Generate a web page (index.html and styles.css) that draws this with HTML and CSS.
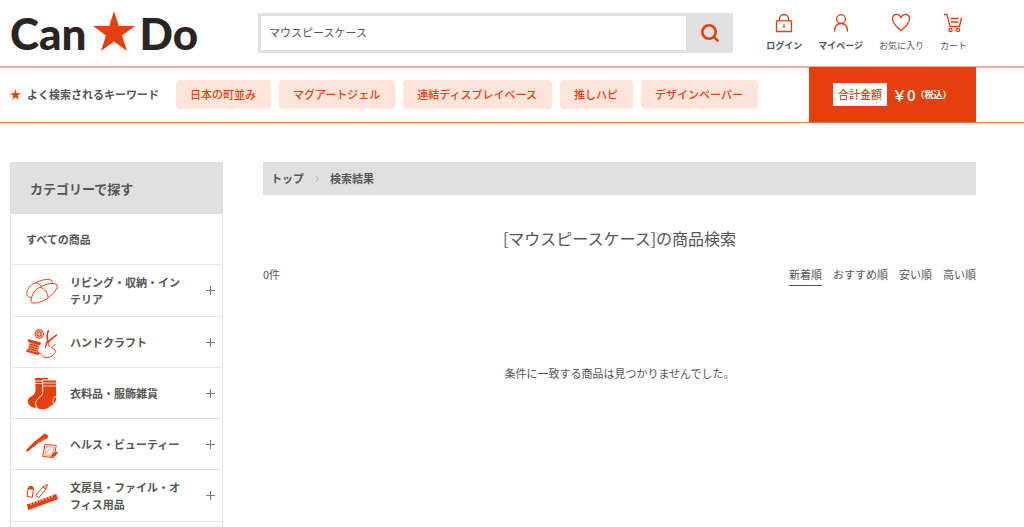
FILE: index.html
```html
<!DOCTYPE html>
<html lang="ja">

<head>
    <meta charset="UTF-8">
    <meta name="viewport" content="width=device-width, initial-scale=1.0">
    <title>マウスピースケースの商品検索 | CanDo</title>
    <link rel="stylesheet" href="styles.css">
</head>

<body>
    <header>
        <div class="header-top">
            <a href="#" class="logo" aria-label="CanDo">
                <span>Can</span>
                <svg class="logo-star" viewBox="0 0 42 40" aria-hidden="true">
                    <path d="M21 0 L25.8 15 L42 15 L29 24.4 L34 40 L21 30.4 L8 40 L13 24.4 L0 15 L16.2 15 Z" />
                </svg>
                <span>Do</span>
            </a>

            <form class="search">
                <input type="text" name="keyword" value="マウスピースケース" aria-label="商品を検索">
                <button type="button" aria-label="検索">
                    <svg viewBox="0 0 18 18">
                        <circle cx="8" cy="8" r="6.7" />
                        <path d="M12.8 12.8 L16.6 16.6" />
                    </svg>
                </button>
            </form>

            <nav class="user-nav">
                <a href="#" class="bold">
                    <svg viewBox="0 0 20 20">
                        <path d="M2.5 7.8h15v10.7h-15z M5.5 7.8V6a4.5 4.5 0 0 1 9 0v1.8 M10 11v4" />
                    </svg>
                    ログイン
                </a>
                <a href="#" class="bold">
                    <svg viewBox="0 0 20 20">
                        <circle cx="10" cy="6" r="4.4" />
                        <path d="M3.5 18.5c0-5 2.5-8 6.5-8s6.5 3 6.5 8" />
                    </svg>
                    マイページ
                </a>
                <a href="#">
                    <svg viewBox="0 0 20 20">
                        <path d="M10 17.8C7.5 15.5 1.5 11 1.5 5.8C1.5 0.5 8 -0.2 10 4.5C12 -0.2 18.5 0.5 18.5 5.8C18.5 11 12.5 15.5 10 17.8Z" />
                    </svg>
                    お気に入り
                </a>
                <a href="#">
                    <svg viewBox="0 0 20 20">
                        <path d="M1 1.5h3l3 12h9.5l2-9 M7.5 5.5h8 M8 9h7.5" />
                        <circle cx="7.5" cy="16.9" r="1.6" />
                        <circle cx="15" cy="16.9" r="1.6" />
                    </svg>
                    カート
                </a>
            </nav>
        </div>

        <div class="keyword-bar">
            <p class="keyword-title">
                <svg viewBox="0 0 42 40" aria-hidden="true">
                    <path d="M21 0 L25.8 15 L42 15 L29 24.4 L34 40 L21 30.4 L8 40 L13 24.4 L0 15 L16.2 15 Z" />
                </svg>
                よく検索されるキーワード
            </p>
            <ul class="keywords">
                <li><a href="#">日本の町並み</a></li>
                <li><a href="#">マグアートジェル</a></li>
                <li><a href="#">連結ディスプレイベース</a></li>
                <li><a href="#">推しハピ</a></li>
                <li><a href="#">デザインペーパー</a></li>
            </ul>
            <div class="total">
                <span class="total-label">合計金額</span>
                <span class="total-price">￥0</span>
                <span class="total-tax">（税込）</span>
            </div>
        </div>
    </header>

    <div class="container">
        <aside>
            <h2>カテゴリーで探す</h2>
            <ul class="categories">
                <li><a href="#">すべての商品</a></li>
                <li>
                    <a href="#">
                        <svg viewBox="0 0 32 32" class="line">
                            <path d="M5 26C5.5 20 9.5 13.5 14 12.5C19 8.5 29 7 31 10C32.5 13 28 18 22 23C17 26.5 11 28.5 7 28C5.5 27.8 5 27 5 26Z M14 12.5C19 13 22 18 22 23" />
                            <path d="M6 22.5C2.5 22.5 0.5 21 0.8 17.5C2 12 6 8.5 9.5 8C15 4.5 24 3.2 26 6C26.5 7 26.5 7.8 26 8.5 M9.5 8C12 8 14.5 10 15.5 11.5" />
                        </svg>
                        <span>リビング・収納・インテリア</span>
                    </a>
                    <button type="button" class="open" aria-label="開く"></button>
                </li>
                <li>
                    <a href="#">
                        <svg viewBox="0 0 32 32" class="line">
                            <circle class="fill" cx="13.3" cy="7" r="4.7" />
                            <circle class="cut" cx="13.3" cy="7" r="3.3" />
                            <path class="cut" d="M13.3 5v4 M11.3 7h4" />
                            <path class="fill" d="M2.3 12L15 15.5L14.4 18L13.5 18L11.8 24.8L13.3 25.5L12.7 28.3L0.2 24.7L0.8 22.3L2 22.3L3.7 15.4L1.7 14.6Z" />
                            <path class="cut faint" d="M3.6 16L13 18.6 M3 18.2L12.6 20.8 M2.6 20.4L12 23 M2 22.6L11.6 25.2" />
                            <path class="thick" d="M22.5 3C20.5 8 21 11 22 14.5 M31 7.5C28 10 24 13 22 15.5" />
                            <path d="M22 14.5L19 21 M22 15.5L23.5 20 M20.5 14L19.5 20" />
                            <path d="M13 26C16 27 17 31 21.5 30.5C26 30 30.5 26 29 23C27.5 20 24 22.5 26.5 19C27.5 17.8 29 18 29.5 17.5" />
                        </svg>
                        <span>ハンドクラフト</span>
                    </a>
                    <button type="button" class="open" aria-label="開く"></button>
                </li>
                <li>
                    <a href="#">
                        <svg viewBox="0 0 32 32">
                            <path d="M9 0H22V17L14 28C10 31 4 30 2 25C1 21 4 19 6 18C9 16 9.5 14 9.5 10Z" />
                            <path class="cut" d="M9 3H22 M9 5.5H22" />
                            <path class="outline" d="M16.5 2H30.5V19C31 25 28 26 24 29C20 32.5 12 33.5 10 28C8.5 23 12 20.5 14.5 18.5C17 16.5 17 14 16.5 9Z" />
                            <path class="cut" d="M17 5H30 M17 8H30 M31 18.5C27.5 18.5 26 21.5 27.5 25.5" />
                        </svg>
                        <span>衣料品・服飾雑貨</span>
                    </a>
                    <button type="button" class="open" aria-label="開く"></button>
                </li>
                <li>
                    <a href="#">
                        <svg viewBox="0 0 32 32" class="line">
                            <path class="fill" d="M0 21L7.5 13.5L18.5 4.5L21.8 6L21.8 9L10.5 15.5L1 23Z" />
                            <path class="cut faint" d="M11.5 13L13 15.5 M13.5 11.8L15 14.3 M15.5 10.5L17 13 M17.5 9.5L19 12" />
                            <path d="M19 15.5L30.3 16.5L28 28.5L16.7 27.5Z" />
                            <path class="faint" d="M20.5 17.5L28.5 18.3L27 23L23 26.5L18.7 26Z M20 24L25 18.5" />
                            <path class="fill" d="M24 28L27 24L29 22.8L32 23L29.5 27Z" />
                        </svg>
                        <span>ヘルス・ビューティー</span>
                    </a>
                    <button type="button" class="open" aria-label="開く"></button>
                </li>
                <li>
                    <a href="#">
                        <svg viewBox="0 0 32 32" class="line">
                            <path d="M2.2 8L1 16.5L6.3 17.3L7.5 8.8Z" />
                            <path class="fill" d="M1.8 9.3C1.4 4.5 8.4 4.5 7.9 9.8Z" />
                            <path d="M21.5 4.5L16.8 7L9.8 15.5L12.8 17.6L20 9Z M16.8 7L20 9" />
                            <path class="fill" d="M0.7 24.5L30.2 14L32 19.3L2.3 29.9Z" />
                            <path class="cut" d="M5 22.5v2.5 M8 21.5v2.5 M11 20.5v2.5 M14 19.4v2.5 M17 18.4v2.5 M20 17.4v2.5 M23 16.4v2.5 M26 15.4v2.5" />
                        </svg>
                        <span>文房具・ファイル・オフィス用品</span>
                    </a>
                    <button type="button" class="open" aria-label="開く"></button>
                </li>
                <li></li>
            </ul>
        </aside>

        <main>
            <nav class="breadcrumb">
                <a href="#">トップ</a>
                <svg viewBox="0 0 4 8" aria-hidden="true"><path d="M0.5 0.5L3 4L0.5 7.5" /></svg>
                <span>検索結果</span>
            </nav>
            <h1>[マウスピースケース]の商品検索</h1>
            <div class="result-head">
                <p>0件</p>
                <ul class="sort">
                    <li><a href="#" class="active">新着順</a></li>
                    <li><a href="#">おすすめ順</a></li>
                    <li><a href="#">安い順</a></li>
                    <li><a href="#">高い順</a></li>
                </ul>
            </div>
            <p class="no-result">条件に一致する商品は見つかりませんでした。</p>
        </main>
    </div>
</body>

</html>
```
FILE: styles.css
```css
* {
    box-sizing: border-box;
}

body {
    margin: 0;
    font-family: "Noto Sans CJK JP", sans-serif;
    font-size: 11px;
    line-height: 17px;
    color: #555;
    background-color: #fff;
    overflow: hidden;
}

h1,
h2,
p,
ul {
    margin: 0;
    padding: 0;
}

ul {
    list-style: none;
}

a {
    color: inherit;
    text-decoration: none;
}

button {
    border: none;
    padding: 0;
    cursor: pointer;
}

/* Header */
.header-top {
    display: flex;
    align-items: center;
    height: 66px;
    padding: 0 57px 0 10px;
}

.logo {
    display: flex;
    align-items: center;
    width: 248px;
    flex-shrink: 0;
    font-family: Lato, sans-serif;
    font-size: 44px;
    font-weight: 900;
    line-height: 64px;
    color: #2b2422;
}

.logo-star {
    width: 42px;
    height: 40px;
    margin: 0 4px 4px 7px;
    fill: #e73e0e;
}

.search {
    display: flex;
    flex: 1;
    height: 40px;
    border: 3px solid #e0e0e0;
}

.search input {
    flex: 1;
    min-width: 0;
    padding: 0 8px 2px;
    border: none;
    outline: none;
    font-family: inherit;
    font-size: 11px;
    color: #555;
}

.search button {
    display: flex;
    align-items: center;
    justify-content: center;
    width: 44px;
    padding-left: 4px;
    background-color: #e0e0e0;
}

.search svg {
    width: 18px;
    height: 18px;
    fill: none;
    stroke: #e73e0e;
    stroke-width: 2.6;
    stroke-linecap: round;
}

.user-nav {
    display: flex;
    gap: 16px;
    margin-left: 33px;
    font-size: 9px;
    line-height: 14px;
}

.user-nav a {
    display: flex;
    flex-direction: column;
    align-items: center;
    gap: 6px;
    white-space: nowrap;
}

.user-nav .bold {
    font-weight: bold;
}

.user-nav svg {
    width: 20px;
    height: 20px;
    fill: none;
    stroke: #e73e0e;
    stroke-width: 1.3;
}

.keyword-bar {
    display: flex;
    align-items: center;
    height: 57px;
    padding: 0 48px 1px 10px;
    border-top: 2px solid #f8a995;
    border-bottom: 1px solid #f0704e;
    white-space: nowrap;
}

.keyword-title {
    display: flex;
    align-items: center;
    gap: 6px;
    margin-right: 17px;
    font-weight: bold;
}

.keyword-title svg {
    width: 11px;
    height: 11px;
    fill: #e73e0e;
}

.keywords {
    display: flex;
    gap: 8px;
}

.keywords a {
    display: block;
    padding: 6px 15px 6px 14px;
    border-radius: 4px;
    background-color: #ffe4da;
    color: #e73e0e;
    font-weight: 500;
}

.total {
    display: flex;
    align-items: center;
    align-self: stretch;
    width: 167px;
    margin: -1px 0 -1px auto;
    padding-left: 24px;
    background-color: #e73e0e;
    color: #fff;
    font-weight: 500;
}

.total-label {
    padding: 3px 5px;
    margin-right: 5px;
    background-color: #fff;
    color: #e73e0e;
}

.total-price {
    font-size: 15px;
}

.total-tax {
    font-size: 9px;
    font-weight: bold;
}

/* Contents */
.container {
    display: flex;
    gap: 40px;
    padding: 39px 48px 0 10px;
}

aside {
    width: 213px;
    flex-shrink: 0;
}

aside h2 {
    padding: 18px 20px 17px;
    background-color: #e0e0e0;
    font-size: 13px;
    line-height: 17px;
}

.categories {
    border: 1px solid #e6e6e6;
    border-top: none;
}

.categories li {
    display: flex;
    align-items: center;
    min-height: 51px;
    padding: 0 7px 0 15px;
    border-bottom: 1px solid #e3e3e3;
}

.categories a {
    display: flex;
    align-items: center;
    gap: 12px;
    flex: 1;
    padding: 9px 0 8px;
    font-weight: bold;
}

.categories a span {
    max-width: 116px;
}

.categories svg {
    width: 32px;
    height: 32px;
    flex-shrink: 0;
    overflow: visible;
    fill: #e73e0e;
}

.categories .line {
    fill: none;
    stroke: #e73e0e;
    stroke-width: 1;
}

.categories .fill {
    fill: #e73e0e;
    stroke: none;
}

.categories .thick {
    stroke-width: 1.6;
}

.categories .cut {
    fill: none;
    stroke: #fff;
    stroke-width: 0.8;
}

.categories .faint {
    stroke-width: 0.5;
}

.categories .outline {
    stroke: #fff;
    stroke-width: 1;
}

/* plus mark */
.open {
    width: 9px;
    height: 9px;
    background:
        linear-gradient(#777, #777) center / 9px 1px no-repeat,
        linear-gradient(#777, #777) center / 1px 9px no-repeat;
}

main {
    flex: 1;
    min-width: 0;
}

.breadcrumb {
    display: flex;
    align-items: center;
    gap: 11px;
    padding: 8px;
    background-color: #e0e0e0;
    font-weight: bold;
}

.breadcrumb svg {
    width: 4px;
    height: 8px;
    fill: none;
    stroke: #bbb;
}

h1 {
    margin-top: 31px;
    font-size: 16px;
    font-weight: normal;
    line-height: 24px;
    text-align: center;
}

.result-head {
    display: flex;
    justify-content: space-between;
    margin-top: 16px;
}

.sort {
    display: flex;
    gap: 11px;
}

.sort a {
    display: block;
    padding-bottom: 2px;
}

.sort .active {
    border-bottom: 1px solid #555;
}

.no-result {
    margin-top: 79px;
    text-align: center;
}
```
